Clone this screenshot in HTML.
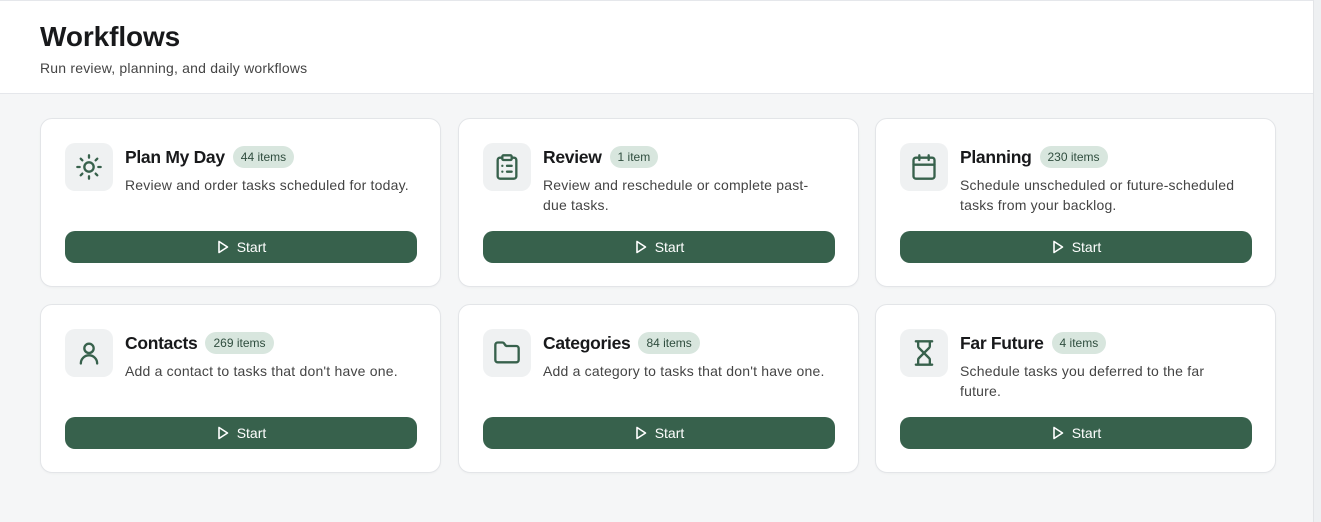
<!DOCTYPE html>
<html><head><meta charset="utf-8"><style>
*{box-sizing:border-box;margin:0;padding:0}
body{width:1321px;height:522px;overflow:hidden;background:#f5f6f7;font-family:"Liberation Sans",Arial,sans-serif;position:relative}
.hdr{position:absolute;left:0;top:0;width:1313px;height:94px;background:#fff;border-top:1px solid #e5e7eb;border-bottom:1px solid #e5e7eb}
.hdr h1{position:absolute;left:40px;top:20px;font-size:28px;font-weight:700;color:#18191b;letter-spacing:-0.1px}
.hdr p{position:absolute;left:40px;top:59px;font-size:14px;color:#444;letter-spacing:0.2px}
.sb{position:absolute;left:1313px;top:0;width:8px;height:522px;background:#eef0f2;border-left:1px solid #e2e4e7}
.card{position:absolute;width:401px;height:169px;background:#fff;border:1px solid #e3e5e8;border-radius:12px;box-shadow:0 1px 2px rgba(0,0,0,.03)}
.ic{position:absolute;left:24px;top:24px;width:48px;height:48px;border-radius:10px;background:#eff1f2;display:flex;align-items:center;justify-content:center}
.ic svg{width:28px;height:28px;fill:none;stroke:#37614c;stroke-width:2;stroke-linecap:round;stroke-linejoin:round}
.t{position:absolute;left:84px;top:27px;display:flex;align-items:center}
.t b{font-size:17.5px;font-weight:700;color:#18191b;letter-spacing:-0.3px}
.t span{margin-left:8px;background:#d8e6de;color:#2f4d3e;font-size:12px;padding:4px 8px;border-radius:12px}
.d{position:absolute;left:84px;top:56px;width:288px;font-size:14px;line-height:20px;color:#444;letter-spacing:0.2px}
.btn{position:absolute;left:24px;top:112px;width:352px;height:32px;border-radius:10px;background:#37614c;color:#fff;font-size:14px;display:flex;align-items:center;justify-content:center}
.btn svg{width:14px;height:14px;fill:none;stroke:#fff;stroke-width:1.6;stroke-linejoin:round;margin-right:7px}
</style></head><body>
<div class="hdr"><h1>Workflows</h1><p>Run review, planning, and daily workflows</p></div>
<div class="sb"></div>

<div class="card" style="left:40px;top:118px">
<div class="ic"><svg viewBox="0 0 24 24"><circle cx="12" cy="12" r="4"/><path d="M12 2v2M12 20v2M4.9 4.9l1.4 1.4M17.7 17.7l1.4 1.4M2 12h2M20 12h2M4.9 19.1l1.4-1.4M17.7 6.3l1.4-1.4"/></svg></div>
<div class="t"><b>Plan My Day</b><span>44 items</span></div>
<div class="d">Review and order tasks scheduled for today.</div>
<div class="btn"><svg viewBox="0 0 14 14"><path d="M3 1.5v11l8.5-5.5z"/></svg>Start</div></div>

<div class="card" style="left:458px;top:118px">
<div class="ic"><svg viewBox="0 0 24 24"><rect x="8" y="2" width="8" height="4" rx="1"/><path d="M16 4h2a2 2 0 0 1 2 2v14a2 2 0 0 1-2 2H6a2 2 0 0 1-2-2V6a2 2 0 0 1 2-2h2M12 11h4M12 16h4M8 11h.01M8 16h.01"/></svg></div>
<div class="t"><b>Review</b><span>1 item</span></div>
<div class="d">Review and reschedule or complete past-due tasks.</div>
<div class="btn"><svg viewBox="0 0 14 14"><path d="M3 1.5v11l8.5-5.5z"/></svg>Start</div></div>

<div class="card" style="left:875px;top:118px">
<div class="ic"><svg viewBox="0 0 24 24"><rect x="3" y="4" width="18" height="18" rx="2"/><path d="M8 2v4M16 2v4M3 10h18"/></svg></div>
<div class="t"><b>Planning</b><span>230 items</span></div>
<div class="d">Schedule unscheduled or future-scheduled tasks from your backlog.</div>
<div class="btn"><svg viewBox="0 0 14 14"><path d="M3 1.5v11l8.5-5.5z"/></svg>Start</div></div>

<div class="card" style="left:40px;top:304px">
<div class="ic"><svg viewBox="0 0 24 24"><circle cx="12" cy="8" r="4"/><path d="M19 21a7 7 0 0 0-14 0"/></svg></div>
<div class="t"><b>Contacts</b><span>269 items</span></div>
<div class="d">Add a contact to tasks that don't have one.</div>
<div class="btn"><svg viewBox="0 0 14 14"><path d="M3 1.5v11l8.5-5.5z"/></svg>Start</div></div>

<div class="card" style="left:458px;top:304px">
<div class="ic"><svg viewBox="0 0 24 24"><path d="M20 20a2 2 0 0 0 2-2V8a2 2 0 0 0-2-2h-7.9a2 2 0 0 1-1.7-.9l-.8-1.2A2 2 0 0 0 7.9 3H4a2 2 0 0 0-2 2v13a2 2 0 0 0 2 2Z"/></svg></div>
<div class="t"><b>Categories</b><span>84 items</span></div>
<div class="d">Add a category to tasks that don't have one.</div>
<div class="btn"><svg viewBox="0 0 14 14"><path d="M3 1.5v11l8.5-5.5z"/></svg>Start</div></div>

<div class="card" style="left:875px;top:304px">
<div class="ic"><svg viewBox="0 0 24 24"><path d="M5 22h14M5 2h14M17 22v-4.2a2 2 0 0 0-.6-1.4L12 12l-4.4 4.4a2 2 0 0 0-.6 1.4V22M7 2v4.2a2 2 0 0 0 .6 1.4L12 12l4.4-4.4a2 2 0 0 0 .6-1.4V2"/></svg></div>
<div class="t"><b>Far Future</b><span>4 items</span></div>
<div class="d">Schedule tasks you deferred to the far future.</div>
<div class="btn"><svg viewBox="0 0 14 14"><path d="M3 1.5v11l8.5-5.5z"/></svg>Start</div></div>
</body></html>
